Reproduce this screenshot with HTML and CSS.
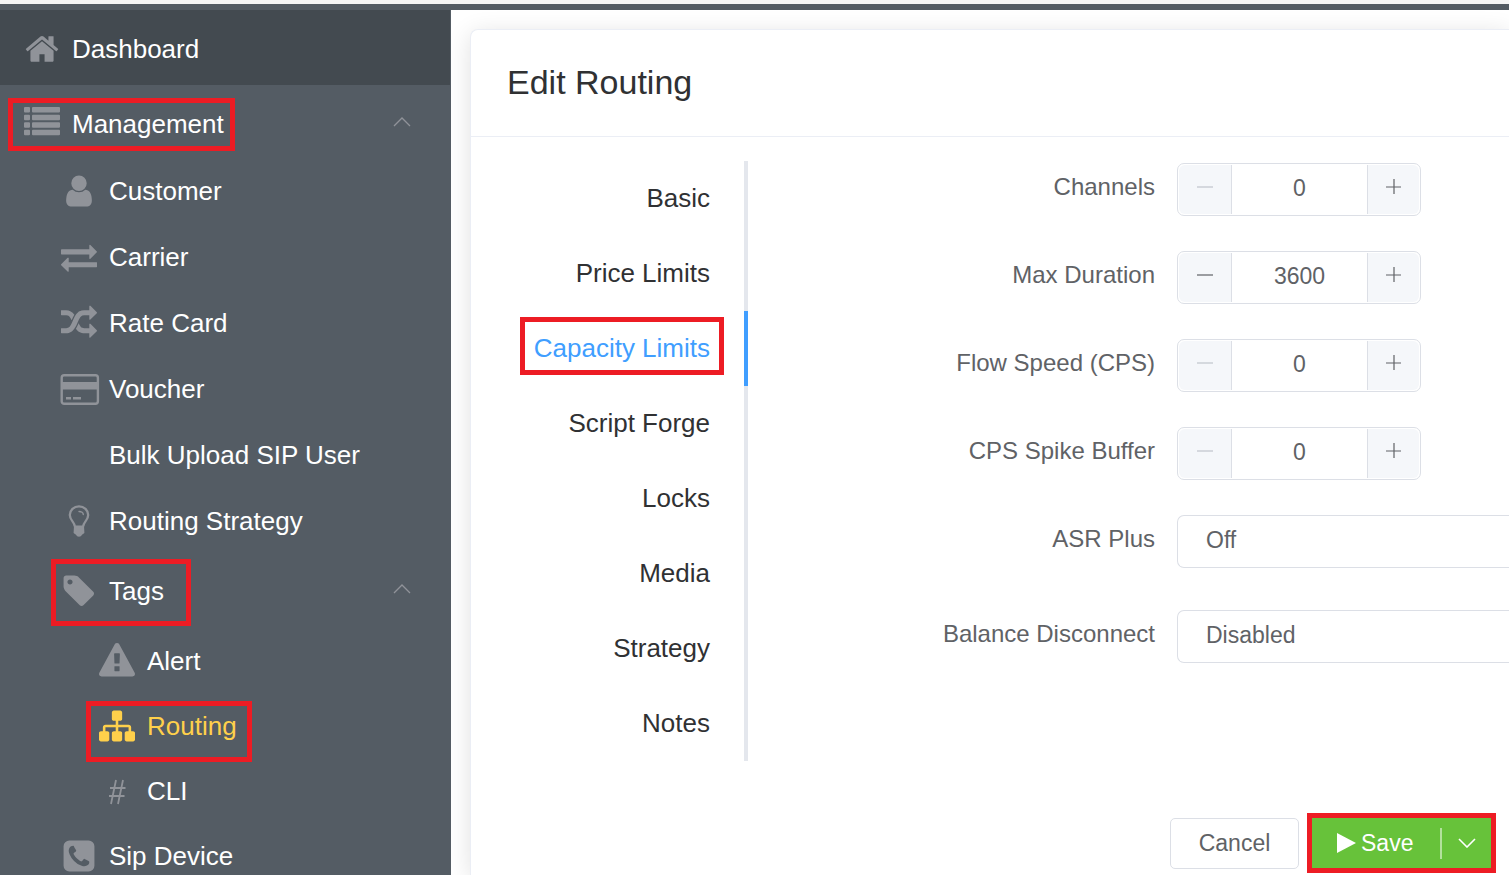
FILE: index.html
```html
<!DOCTYPE html>
<html lang="en">
<head>
<meta charset="utf-8">
<meta name="viewport" content="width=device-width, initial-scale=1">
<title>Edit Routing</title>
<link rel="stylesheet" href="styles.css">
</head>
<body>
<div class="topbar"></div>
<div class="layout">
  <nav class="sidebar" aria-label="Main">
    <a class="item item-top item-current" href="#dashboard">
      <svg class="icon" viewBox="0 0 1792 1792"><path d="M1472 992v480q0 26-19 45t-45 19h-384v-384h-256v384h-384q-26 0-45-19t-19-45v-480q0-1 .5-3t.5-3l575-474 575 474q1 2 1 6zm223-69l-62 74q-8 9-21 11h-3q-13 0-21-7l-692-577-692 577q-12 8-24 7-13-2-21-11l-62-74q-8-10-7-23.5t11-21.5l719-599q32-26 76-26t76 26l244 204v-195q0-14 9-23t23-9h192q14 0 23 9t9 23v408l219 182q10 8 11 21.5t-7 23.5z"/></svg>
      <span>Dashboard</span>
    </a>
    <a class="item item-group" href="#management">
      <svg class="icon" viewBox="0 0 36 36"><path d="M1 1h4a1 1 0 0 1 1 1v3.500a1 1 0 0 1-1 1H1a1 1 0 0 1-1-1V2a1 1 0 0 1 1-1zm8 0h26a1 1 0 0 1 1 1v3.500a1 1 0 0 1-1 1H9a1 1 0 0 1-1-1V2a1 1 0 0 1 1-1zM1 8.700h4a1 1 0 0 1 1 1v3.500a1 1 0 0 1-1 1H1a1 1 0 0 1-1-1V9.700a1 1 0 0 1 1-1zm8 0h26a1 1 0 0 1 1 1v3.500a1 1 0 0 1-1 1H9a1 1 0 0 1-1-1V9.700a1 1 0 0 1 1-1zM1 16.200h4a1 1 0 0 1 1 1v3.500a1 1 0 0 1-1 1H1a1 1 0 0 1-1-1v-3.500a1 1 0 0 1 1-1zm8 0h26a1 1 0 0 1 1 1v3.500a1 1 0 0 1-1 1H9a1 1 0 0 1-1-1v-3.500a1 1 0 0 1 1-1zM1 23.700h4a1 1 0 0 1 1 1v3.500a1 1 0 0 1-1 1H1a1 1 0 0 1-1-1v-3.500a1 1 0 0 1 1-1zm8 0h26a1 1 0 0 1 1 1v3.500a1 1 0 0 1-1 1H9a1 1 0 0 1-1-1v-3.500a1 1 0 0 1 1-1z"/></svg>
      <span>Management</span>
      <svg class="chevron" viewBox="0 0 18 10"><path d="M1 9l8-8 8 8"/></svg>
      <i class="mark mark-management"></i>
    </a>
    <a class="item item-sub" href="#customer">
      <svg class="icon" viewBox="0 0 1792 1792"><path d="M1536 1399q0 109-62.500 187t-150.500 78h-854q-88 0-150.500-78t-62.500-187q0-85 8.500-160.500t31.500-152 58.500-131 94-89 134.500-34.500q131 128 313 128t313-128q76 0 134.500 34.500t94 89 58.500 131 31.500 152 8.500 160.500zm-256-887q0 159-112.500 271.500t-271.500 112.500-271.500-112.500-112.500-271.500 112.500-271.500 271.500-112.500 271.500 112.500 112.500 271.500z"/></svg>
      <span>Customer</span>
    </a>
    <a class="item item-sub" href="#carrier">
      <svg class="icon" viewBox="0 0 1792 1792"><path d="M1792 1184v192q0 13-9.500 22.500t-22.500 9.500h-1376v192q0 13-9.500 22.500t-22.500 9.500q-12 0-24-10l-319-320q-9-9-9-22 0-14 9-23l320-320q9-9 23-9 13 0 22.500 9.500t9.500 22.500v192h1376q13 0 22.500 9.500t9.500 22.500zm0-544q0 14-9 23l-320 320q-9 9-23 9-13 0-22.500-9.500t-9.500-22.500v-192h-1376q-13 0-22.500-9.500t-9.500-22.500v-192q0-13 9.500-22.500t22.500-9.500h1376v-192q0-14 9-23t23-9q12 0 24 10l319 319q9 9 9 23z"/></svg>
      <span>Carrier</span>
    </a>
    <a class="item item-sub" href="#rate-card">
      <svg class="icon" viewBox="0 0 1792 1792"><path d="M666 481q-60 92-137 273-22-45-37-72.500t-40.500-63.500-51-56.500-63-35-81.500-14.500h-224q-14 0-23-9t-9-23v-192q0-14 9-23t23-9h224q250 0 410 225zm1126 799q0 14-9 23l-320 320q-9 9-23 9-13 0-22.500-9.500t-9.500-22.500v-192q-32 0-85 .5t-81 1-73-1-71-5-64-10.500-63-18.500-58-28.500-59-40-55-53.500-56-69.500q59-93 136-273 22 45 37 72.500t40.500 63.500 51 56.500 63 35 81.500 14.500h256v-192q0-14 9-23t23-9q12 0 24 10l319 319q9 9 9 23zm0-896q0 14-9 23l-320 320q-9 9-23 9-13 0-22.500-9.500t-9.500-22.500v-192h-256q-48 0-87 15t-69 45-51 61.500-45 77.500q-32 62-78 171-29 66-49.500 111t-54 105-64 100-74 83-90 68.500-106.500 42-128 16.500h-224q-14 0-23-9t-9-23v-192q0-14 9-23t23-9h224q48 0 87-15t69-45 51-61.500 45-77.500q32-62 78-171 29-66 49.500-111t54-105 64-100 74-83 90-68.500 106.500-42 128-16.500h256v-192q0-14 9-23t23-9q12 0 24 10l319 319q9 9 9 23z"/></svg>
      <span>Rate Card</span>
    </a>
    <a class="item item-sub" href="#voucher">
      <svg class="icon" viewBox="0 0 36 36"><rect x="0.700" y="4.200" width="36.200" height="28.600" rx="2.500" fill="none" stroke="currentColor" stroke-width="2.400"/><path d="M0.500 11h37v7.500h-37zM5 26h5v2.500H5zM12 26h8v2.500h-8z"/></svg>
      <span>Voucher</span>
    </a>
    <a class="item item-sub" href="#bulk-upload">
      <i class="icon"></i>
      <span>Bulk Upload SIP User</span>
    </a>
    <a class="item item-sub" href="#routing-strategy">
      <svg class="icon" viewBox="0 0 36 36"><path d="M13.800 23.500c0-4.500-5-6-5-11.500a9.200 8.700 0 0 1 18.400 0c0 5.500-5 7-5 11.500" fill="none" stroke="currentColor" stroke-width="2.300"/><path d="M18 8.500c2.500 0 4.300 1.500 4.300 3" fill="none" stroke="currentColor" stroke-width="1.400" stroke-linecap="round"/><path d="M13 22.500h10l.4 7.500-2.400 1.800c-.6 1.200-1.600 1.900-3 1.900s-2.400-.7-3-1.900L12.600 30z"/></svg>
      <span>Routing Strategy</span>
    </a>
    <a class="item item-tags" href="#tags">
      <svg class="icon" viewBox="0 0 1792 1792"><path d="M576 448q0-53-37.500-90.500t-90.500-37.500-90.500 37.500-37.500 90.500 37.500 90.500 90.500 37.500 90.500-37.500 37.500-90.500zm1067 576q0 53-37 90l-491 492q-39 37-91 37-53 0-90-37l-715-716q-38-37-64.500-101t-26.500-117v-416q0-52 38-90t90-38h416q53 0 117 26.500t102 64.500l715 714q37 39 37 91z"/></svg>
      <span>Tags</span>
      <svg class="chevron" viewBox="0 0 18 10"><path d="M1 9l8-8 8 8"/></svg>
      <i class="mark mark-tags"></i>
    </a>
    <a class="item item-leaf" href="#alert">
      <svg class="icon" viewBox="0 0 1792 1792"><path d="M1024 1375v-190q0-14-9.500-23.500t-22.500-9.500h-192q-13 0-22.500 9.500t-9.500 23.500v190q0 14 9.500 23.500t22.500 9.500h192q13 0 22.500-9.500t9.500-23.500zm-2-374l18-459q0-12-10-19-13-11-24-11h-220q-11 0-24 11-10 7-10 21l17 457q0 10 10 16.500t24 6.500h185q14 0 23.500-6.500t10.500-16.500zm-14-934l768 1408q35 63-2 126-17 29-46.500 46t-63.500 17h-1536q-34 0-63.500-17t-46.500-46q-37-63-2-126l768-1408q17-31 47-49t65-18 65 18 47 49z"/></svg>
      <span>Alert</span>
    </a>
    <a class="item item-leaf item-active" href="#routing">
      <svg class="icon" viewBox="0 0 1792 1792"><path d="M1792 1248v320q0 40-28 68t-68 28h-320q-40 0-68-28t-28-68v-320q0-40 28-68t68-28h96v-192h-512v192h96q40 0 68 28t28 68v320q0 40-28 68t-68 28h-320q-40 0-68-28t-28-68v-320q0-40 28-68t68-28h96v-192h-512v192h96q40 0 68 28t28 68v320q0 40-28 68t-68 28h-320q-40 0-68-28t-28-68v-320q0-40 28-68t68-28h96v-192q0-52 38-90t90-38h512v-192h-96q-40 0-68-28t-28-68v-320q0-40 28-68t68-28h320q40 0 68 28t28 68v320q0 40-28 68t-68 28h-96v192h512q52 0 90 38t38 90v192h96q40 0 68 28t28 68z"/></svg>
      <span>Routing</span>
      <i class="mark mark-routing"></i>
    </a>
    <a class="item item-leaf" href="#cli">
      <svg class="icon" viewBox="0 0 36 36"><path d="M17 7l-5 24M24 7l-5 24M11 15h15.500M10 23h15.500" fill="none" stroke="currentColor" stroke-width="1.800"/></svg>
      <span>CLI</span>
    </a>
    <a class="item item-sub" href="#sip-device">
      <svg class="icon" viewBox="0 0 1792 1792"><path d="M1408 1193q0-11-2-16t-18-16.500-40.500-25-47.500-26.500-45.500-25-28.500-15q-5-3-19-13t-25-15-21-5q-15 0-36.500 20.500t-39.500 45-38.500 45-33.500 20.500q-7 0-16.500-3.500t-15.500-6.500-17-9.500-14-8.500q-99-55-170-126.500t-127-170.500q-2-3-8.500-14t-9.500-17-6.500-15.500-3.500-16.500q0-13 20.500-33.500t45-38.500 45-39.500 20.500-36.500q0-10-5-21t-15-25-13-19q-3-6-15-28.500t-25-45.500-26.500-47.500-25-40.500-16.500-18-16-2q-48 0-101 22-46 21-80 94.500t-34 130.500q0 16 2.500 34t5 30.500 9 33 10 29.500 12.500 33 11 30q60 164 216.500 320.500t320.500 216.500q6 2 30 11t33 12.500 29.500 10 33 9 30.500 5 34 2.500q57 0 130.500-34t94.500-80q22-53 22-101zm256-777v960q0 119-84.500 203.500t-203.500 84.500h-960q-119 0-203.500-84.500t-84.500-203.500v-960q0-119 84.500-203.500t203.500-84.500h960q119 0 203.500 84.500t84.500 203.500z"/></svg>
      <span>Sip Device</span>
    </a>
  </nav>

  <main class="main">
    <section class="card">
      <h1 class="card-title">Edit Routing</h1>
      <div class="card-body">
        <div class="tabs" role="tablist">
          <button class="tab" type="button" role="tab">Basic</button>
          <button class="tab" type="button" role="tab">Price Limits</button>
          <button class="tab tab-active" type="button" role="tab" aria-selected="true">Capacity Limits<i class="mark mark-capacity"></i></button>
          <button class="tab" type="button" role="tab">Script Forge</button>
          <button class="tab" type="button" role="tab">Locks</button>
          <button class="tab" type="button" role="tab">Media</button>
          <button class="tab" type="button" role="tab">Strategy</button>
          <button class="tab" type="button" role="tab">Notes</button>
        </div>
        <form class="form" id="routing-form">
          <div class="field">
            <label class="label" for="channels">Channels</label>
            <div class="stepper">
              <button class="step step-down" type="button" aria-label="Decrease channels" disabled><svg class="step-icon" viewBox="0 0 16 16"><path d="M0 8h16"/></svg></button>
              <input class="step-value" id="channels" type="text" inputmode="numeric" value="0">
              <button class="step step-up" type="button" aria-label="Increase channels"><svg class="step-icon" viewBox="0 0 16 16"><path d="M0 8h15M8 0v15"/></svg></button>
            </div>
          </div>
          <div class="field">
            <label class="label" for="duration">Max Duration</label>
            <div class="stepper">
              <button class="step step-down" type="button" aria-label="Decrease duration"><svg class="step-icon" viewBox="0 0 16 16"><path d="M0 8h16"/></svg></button>
              <input class="step-value" id="duration" type="text" inputmode="numeric" value="3600">
              <button class="step step-up" type="button" aria-label="Increase duration"><svg class="step-icon" viewBox="0 0 16 16"><path d="M0 8h15M8 0v15"/></svg></button>
            </div>
          </div>
          <div class="field">
            <label class="label" for="flow">Flow Speed (CPS)</label>
            <div class="stepper">
              <button class="step step-down" type="button" aria-label="Decrease flow speed" disabled><svg class="step-icon" viewBox="0 0 16 16"><path d="M0 8h16"/></svg></button>
              <input class="step-value" id="flow" type="text" inputmode="numeric" value="0">
              <button class="step step-up" type="button" aria-label="Increase flow speed"><svg class="step-icon" viewBox="0 0 16 16"><path d="M0 8h15M8 0v15"/></svg></button>
            </div>
          </div>
          <div class="field">
            <label class="label" for="spike">CPS Spike Buffer</label>
            <div class="stepper">
              <button class="step step-down" type="button" aria-label="Decrease spike buffer" disabled><svg class="step-icon" viewBox="0 0 16 16"><path d="M0 8h16"/></svg></button>
              <input class="step-value" id="spike" type="text" inputmode="numeric" value="0">
              <button class="step step-up" type="button" aria-label="Increase spike buffer"><svg class="step-icon" viewBox="0 0 16 16"><path d="M0 8h15M8 0v15"/></svg></button>
            </div>
          </div>
          <div class="field field-wide">
            <label class="label" for="asr">ASR Plus</label>
            <select class="select" id="asr"><option>Off</option><option>On</option></select>
          </div>
          <div class="field">
            <label class="label" for="balance">Balance Disconnect</label>
            <select class="select" id="balance"><option>Disabled</option><option>Enabled</option></select>
          </div>
        </form>
      </div>
      <div class="actions">
        <button class="cancel" type="button">Cancel</button>
        <div class="split">
          <button class="save" type="submit" form="routing-form"><svg class="play" viewBox="0 0 19 20"><path d="M0 0l19 10L0 20z"/></svg>Save</button>
          <button class="more" type="button" aria-label="More save options"><svg class="more-icon" viewBox="0 0 18 10"><path d="M1 1l8 8 8-8"/></svg></button>
          <i class="mark mark-save"></i>
        </div>
      </div>
    </section>
  </main>
</div>
</body>
</html>
```
FILE: styles.css
```css
* {
  box-sizing: border-box;
}

body {
  margin: 0;
  height: 100vh;
  display: flex;
  flex-direction: column;
  padding-bottom: 5px;
  overflow: hidden;
  background: #fff;
  font-family: "Liberation Sans", Arial, sans-serif;
}

button,
input,
select {
  font-family: inherit;
}

.topbar {
  flex: none;
  height: 10px;
  border-top: 4px solid #f6f6f6;
  background: #545c64;
}

.layout {
  flex: 1;
  min-height: 0;
  display: flex;
}

/* Sidebar */

.sidebar {
  flex: none;
  width: 451px;
  overflow: hidden;
  border-right: 1px solid #545c64;
  background: #545c64;
}

.item {
  position: relative;
  display: flex;
  align-items: center;
  gap: 12px;
  height: 66px;
  padding-right: 39px;
  color: #fff;
  font-size: 26px;
  line-height: 30px;
  text-decoration: none;
  white-space: nowrap;
}

.item-top {
  height: 75px;
  padding-top: 3px;
  padding-left: 24px;
}

.item-current {
  background: #434a50;
}

.item-group {
  height: 73px;
  padding-top: 5px;
  padding-left: 24px;
}

.item-sub {
  padding-left: 61px;
}

.item-tags {
  height: 74px;
  padding-left: 61px;
}

.item-leaf {
  height: 65px;
  padding-left: 99px;
}

.icon {
  flex: none;
  width: 36px;
  height: 36px;
  overflow: visible;
  color: #909399;
  fill: currentColor;
}

.item-active,
.item-active .icon {
  color: #ffd04b;
}

.chevron {
  width: 18px;
  height: 10px;
  margin-left: auto;
  margin-bottom: 4px;
  fill: none;
  stroke: #909399;
  stroke-width: 1.3;
}

/* Highlight frames */

.mark {
  position: absolute;
  border: 5px solid #ed1c24;
  pointer-events: none;
}

.mark-management {
  top: 13px;
  left: 8px;
  width: 227px;
  height: 53px;
}

.mark-tags {
  top: 5px;
  left: 51px;
  width: 140px;
  height: 67px;
}

.mark-routing {
  top: 8px;
  left: 86px;
  width: 166px;
  height: 61px;
  z-index: 1;
}

.mark-capacity {
  top: 6px;
  right: 20px;
  width: 204px;
  height: 58px;
}

.mark-save {
  inset: -5px;
}

/* Card */

.main {
  flex: 1;
  min-width: 0;
  display: flex;
  padding: 19px 0 0 19px;
  overflow: hidden;
}

.card {
  flex: 1;
  min-width: 0;
  border: 1px solid #ebeef5;
  border-width: 1px 0 0 1px;
  border-radius: 8px 0 0 0;
  background: #fff;
  box-shadow: 0 4px 24px rgba(0, 0, 0, 0.12);
}

.card-title {
  margin: 0;
  padding: 32px 36px 34px;
  border-bottom: 1px solid #ebeef5;
  color: #303133;
  font-size: 34px;
  font-weight: 400;
  line-height: 40px;
}

.card-body {
  display: flex;
  padding-top: 24px;
}

.tabs {
  flex: none;
  width: 277px;
  display: flex;
  flex-direction: column;
}

.tab {
  position: relative;
  height: 75px;
  padding: 0 34px 0 0;
  border: 0;
  border-right: 4px solid #e4e7ed;
  background: none;
  color: #303133;
  font-size: 26px;
  text-align: right;
}

.tab-active {
  border-right-color: #409eff;
  color: #409eff;
}

/* Form */

.form {
  flex: 1;
  min-width: 0;
  padding-top: 2px;
}

.field {
  display: flex;
  gap: 22px;
  margin-bottom: 35px;
}

.field-wide {
  margin-bottom: 42px;
}

.label {
  flex: none;
  width: 407px;
  color: #606266;
  font-size: 24px;
  line-height: 48px;
  text-align: right;
}

.stepper {
  display: flex;
  width: 244px;
  height: 53px;
  padding: 1px;
  border: 1px solid #dcdfe6;
  border-radius: 7px;
}

.step {
  flex: none;
  display: flex;
  align-items: center;
  justify-content: center;
  width: 53px;
  padding: 0 0 5px;
  border: 0 solid #dcdfe6;
  background: #f5f7fa;
  color: #606266;
}

.step:disabled {
  color: #c0c4cc;
}

.step-down {
  border-right-width: 1px;
  border-radius: 6px 0 0 6px;
}

.step-up {
  width: 52px;
  border-left-width: 1px;
  border-radius: 0 6px 6px 0;
}

.step-icon {
  width: 16px;
  height: 16px;
  fill: none;
  stroke: currentColor;
  stroke-width: 1.2;
}

.step-value {
  flex: 1;
  min-width: 0;
  padding: 0 0 2px;
  border: 0;
  background: none;
  color: #606266;
  font-size: 23px;
  text-align: center;
}

.select {
  flex: 1;
  min-width: 0;
  height: 53px;
  padding: 0 28px 3px;
  border: 1px solid #dcdfe6;
  border-right: 0;
  border-radius: 7px 0 0 7px;
  appearance: none;
  background: #fff;
  color: #606266;
  font-size: 23px;
}

/* Actions */

.actions {
  display: flex;
  justify-content: flex-end;
  gap: 13px;
  padding: 57px 18px 0;
}

.cancel {
  width: 129px;
  height: 51px;
  padding: 0;
  border: 1px solid #dcdfe6;
  border-radius: 5px;
  background: #fff;
  color: #606266;
  font-size: 23px;
}

.split {
  position: relative;
  display: flex;
  align-items: center;
  height: 50px;
  background: #67c23a;
}

.save {
  display: flex;
  align-items: center;
  gap: 5px;
  width: 128px;
  height: 50px;
  padding: 0 0 0 25px;
  border: 0;
  background: none;
  color: #fff;
  font-size: 23px;
}

.play {
  width: 19px;
  height: 20px;
  fill: #fff;
}

.more {
  display: flex;
  align-items: center;
  justify-content: center;
  width: 51px;
  height: 31px;
  padding: 0;
  border: 0;
  border-left: 2px solid rgba(255, 255, 255, 0.5);
  background: none;
}

.more-icon {
  width: 18px;
  height: 10px;
  fill: none;
  stroke: #fff;
  stroke-width: 1.6;
}
```
